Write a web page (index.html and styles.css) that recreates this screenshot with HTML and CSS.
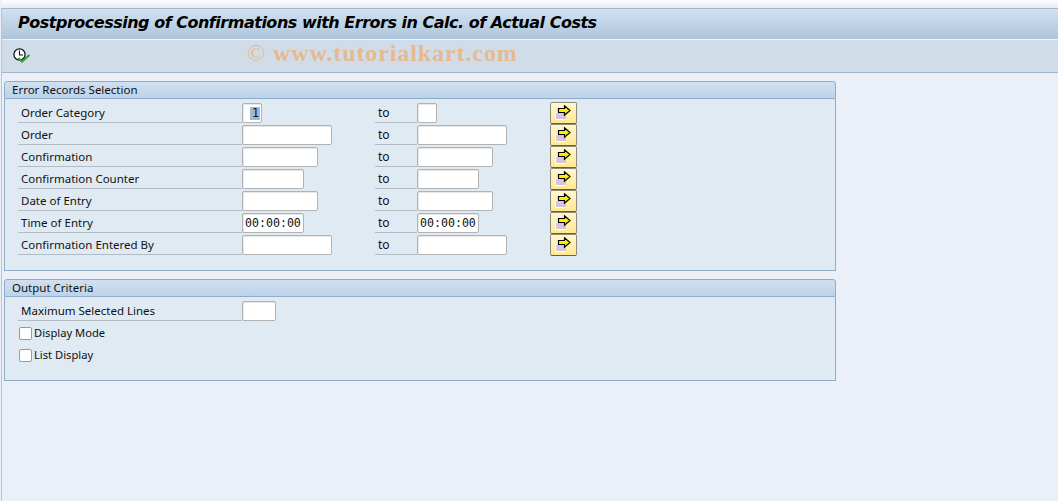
FILE: index.html
```html
<!DOCTYPE html>
<html lang="en">
<head>
<meta charset="utf-8">
<title>Postprocessing of Confirmations</title>
<link rel="stylesheet" href="styles.css">
</head>
<body>
<svg class="defs" width="0" height="0" aria-hidden="true">
  <symbol id="arrow" viewBox="0 0 17 16">
    <rect x="0" y="7" width="11" height="8" fill="#fff"/>
    <rect x="1" y="8" width="10" height="6" fill="#d6c4de"/>
    <path d="M3.5 3.5H9.5V0.8L15 5.5L9.5 10.2V7.5H3.5Z" fill="#ffee00" stroke="#000" stroke-width="1.2"/>
  </symbol>
</svg>
<div class="window">
  <div class="topstrip"></div>
  <h1 class="titlebar">Postprocessing of Confirmations with Errors in Calc. of Actual Costs</h1>
  <div class="toolbar">
    <svg class="exec" width="18" height="18" viewBox="0 0 18 18">
      <circle cx="6.5" cy="7.5" r="5.6" fill="#fff" stroke="#111" stroke-width="1.3"/>
      <path d="M6.5 3.5V8H10" fill="none" stroke="#111" stroke-width="1.1"/>
      <path d="M5.5 11L9 14.5L16.5 8" fill="none" stroke="#3fa03a" stroke-width="2.2"/>
    </svg>
    <span class="watermark"><span class="copy">©</span> www.tutorialkart.com</span>
  </div>
  <main class="content">
    <section class="panel">
      <h2 class="panel-head">Error Records Selection</h2>
      <div class="panel-body body-select">
        <div class="row"><span class="label">Order Category</span><span class="field w20"><span class="sel">1</span></span><span class="to">to</span><span class="field w20"></span><button class="more"><svg width="17" height="16"><use href="#arrow"/></svg></button></div>
        <div class="row"><span class="label">Order</span><span class="field w90"></span><span class="to">to</span><span class="field w90"></span><button class="more"><svg width="17" height="16"><use href="#arrow"/></svg></button></div>
        <div class="row"><span class="label">Confirmation</span><span class="field w76"></span><span class="to">to</span><span class="field w76"></span><button class="more"><svg width="17" height="16"><use href="#arrow"/></svg></button></div>
        <div class="row"><span class="label">Confirmation Counter</span><span class="field w62"></span><span class="to">to</span><span class="field w62"></span><button class="more"><svg width="17" height="16"><use href="#arrow"/></svg></button></div>
        <div class="row"><span class="label">Date of Entry</span><span class="field w76"></span><span class="to">to</span><span class="field w76"></span><button class="more"><svg width="17" height="16"><use href="#arrow"/></svg></button></div>
        <div class="row"><span class="label">Time of Entry</span><span class="field w62">00:00:00</span><span class="to">to</span><span class="field w62">00:00:00</span><button class="more"><svg width="17" height="16"><use href="#arrow"/></svg></button></div>
        <div class="row"><span class="label">Confirmation Entered By</span><span class="field w90"></span><span class="to">to</span><span class="field w90"></span><button class="more"><svg width="17" height="16"><use href="#arrow"/></svg></button></div>
      </div>
    </section>
    <section class="panel">
      <h2 class="panel-head">Output Criteria</h2>
      <div class="panel-body body-output">
        <div class="row"><span class="label">Maximum Selected Lines</span><span class="field w34"></span></div>
        <div class="check-row"><span class="check"></span><span class="check-label">Display Mode</span></div>
        <div class="check-row"><span class="check"></span><span class="check-label">List Display</span></div>
      </div>
    </section>
  </main>
</div>
</body>
</html>
```
FILE: styles.css
```css
* { box-sizing: border-box; }
html, body { margin: 0; height: 100%; }
body {
  background: #eaeff8;
  font-family: "Noto Sans", sans-serif;
  font-size: 11.5px;
  color: #111;
  overflow: hidden;
}
.defs { display: block; height: 0; }
.window {
  height: 501px;
  margin-left: 1px;
  border-left: 1px solid #b6c4d6;
  display: flex;
  flex-direction: column;
}
.topstrip {
  height: 9px;
  margin-left: -1px;
  background: linear-gradient(#fbfcfe, #e6ebf4);
  border-bottom: 1px solid #a7b6c9;
}
.titlebar {
  height: 31px;
  margin: 0;
  padding: 0 0 4px 16px;
  display: flex;
  align-items: center;
  font-family: "DejaVu Sans", sans-serif;
  font-size: 16px;
  font-weight: bold;
  font-style: italic;
  letter-spacing: -0.49px;
  color: #000;
  background: linear-gradient(#d2e1ef, #adc5dc);
  border-bottom: 1px solid #eef4f9;
}
.toolbar {
  position: relative;
  height: 33px;
  padding-left: 11px;
  display: flex;
  align-items: center;
  background: #d0dde8;
  border-bottom: 1px solid #a3b5cb;
}
.watermark {
  position: absolute;
  left: 245px;
  top: 0;
  font-family: "Liberation Serif", serif;
  font-size: 24px;
  font-weight: bold;
  letter-spacing: 0.9px;
  line-height: 26px;
  color: #e6b98f;
}
.copy { font-weight: normal; }
.content {
  padding: 8px 0 0 2px;
  display: flex;
  flex-direction: column;
  gap: 8px;
}
.panel { width: 832px; }
.panel-head {
  height: 18px;
  margin: 0;
  padding-left: 7px;
  font-size: 11.5px;
  font-weight: normal;
  line-height: 15px;
  background: linear-gradient(#d0e0f0, #bdd3e9);
  border: 1px solid #8fabc8;
  border-radius: 3px 3px 0 0;
}
.panel-body {
  background: #dfeaf3;
  border: 1px solid #8fabc8;
  border-top: 0;
  padding: 3px 0 0 13px;
}
.body-select { height: 172px; }
.body-output { height: 84px; }
.row {
  height: 22px;
  display: grid;
  grid-template-columns: 224px 133px 42px 133px 27px;
  align-items: start;
}
.label, .to {
  height: 21px;
  padding-left: 3px;
  line-height: 22px;
  border-bottom: 1px solid #b3bcc4;
}
.to { font-size: 12px; }
.field {
  height: 20px;
  margin-top: 1px;
  padding: 0 2px;
  background: #fff;
  border: 1px solid #b2b2b2;
  border-radius: 2px;
  box-shadow: inset 1px 1px 0 #e8e8e8;
  font-family: "DejaVu Sans Mono", monospace;
  font-size: 11.6px;
  line-height: 18px;
  white-space: nowrap;
}
.sel { display: inline-block; margin-left: 5px; padding: 0 1px 0 2px; line-height: 13px; background: #9db9d6; }
.w20 { width: 20px; }
.w34 { width: 34px; }
.w62 { width: 62px; }
.w76 { width: 76px; }
.w90 { width: 90px; }
.more {
  width: 27px;
  height: 22px;
  padding: 0;
  display: flex;
  align-items: center;
  justify-content: center;
  background: linear-gradient(#fff8d4, #ffe98f);
  border: 1px solid #8f8c7c;
  border-bottom-color: #5f5f58;
  border-radius: 2px;
}
.check-row {
  height: 22px;
  display: flex;
  align-items: center;
  gap: 2px;
  padding-left: 1px;
}
.check {
  width: 13px;
  height: 13px;
  background: #fff;
  border: 1px solid #9a9a9a;
  border-radius: 2px;
}
.check-label { font-size: 11.2px; padding-bottom: 1px; }
```
